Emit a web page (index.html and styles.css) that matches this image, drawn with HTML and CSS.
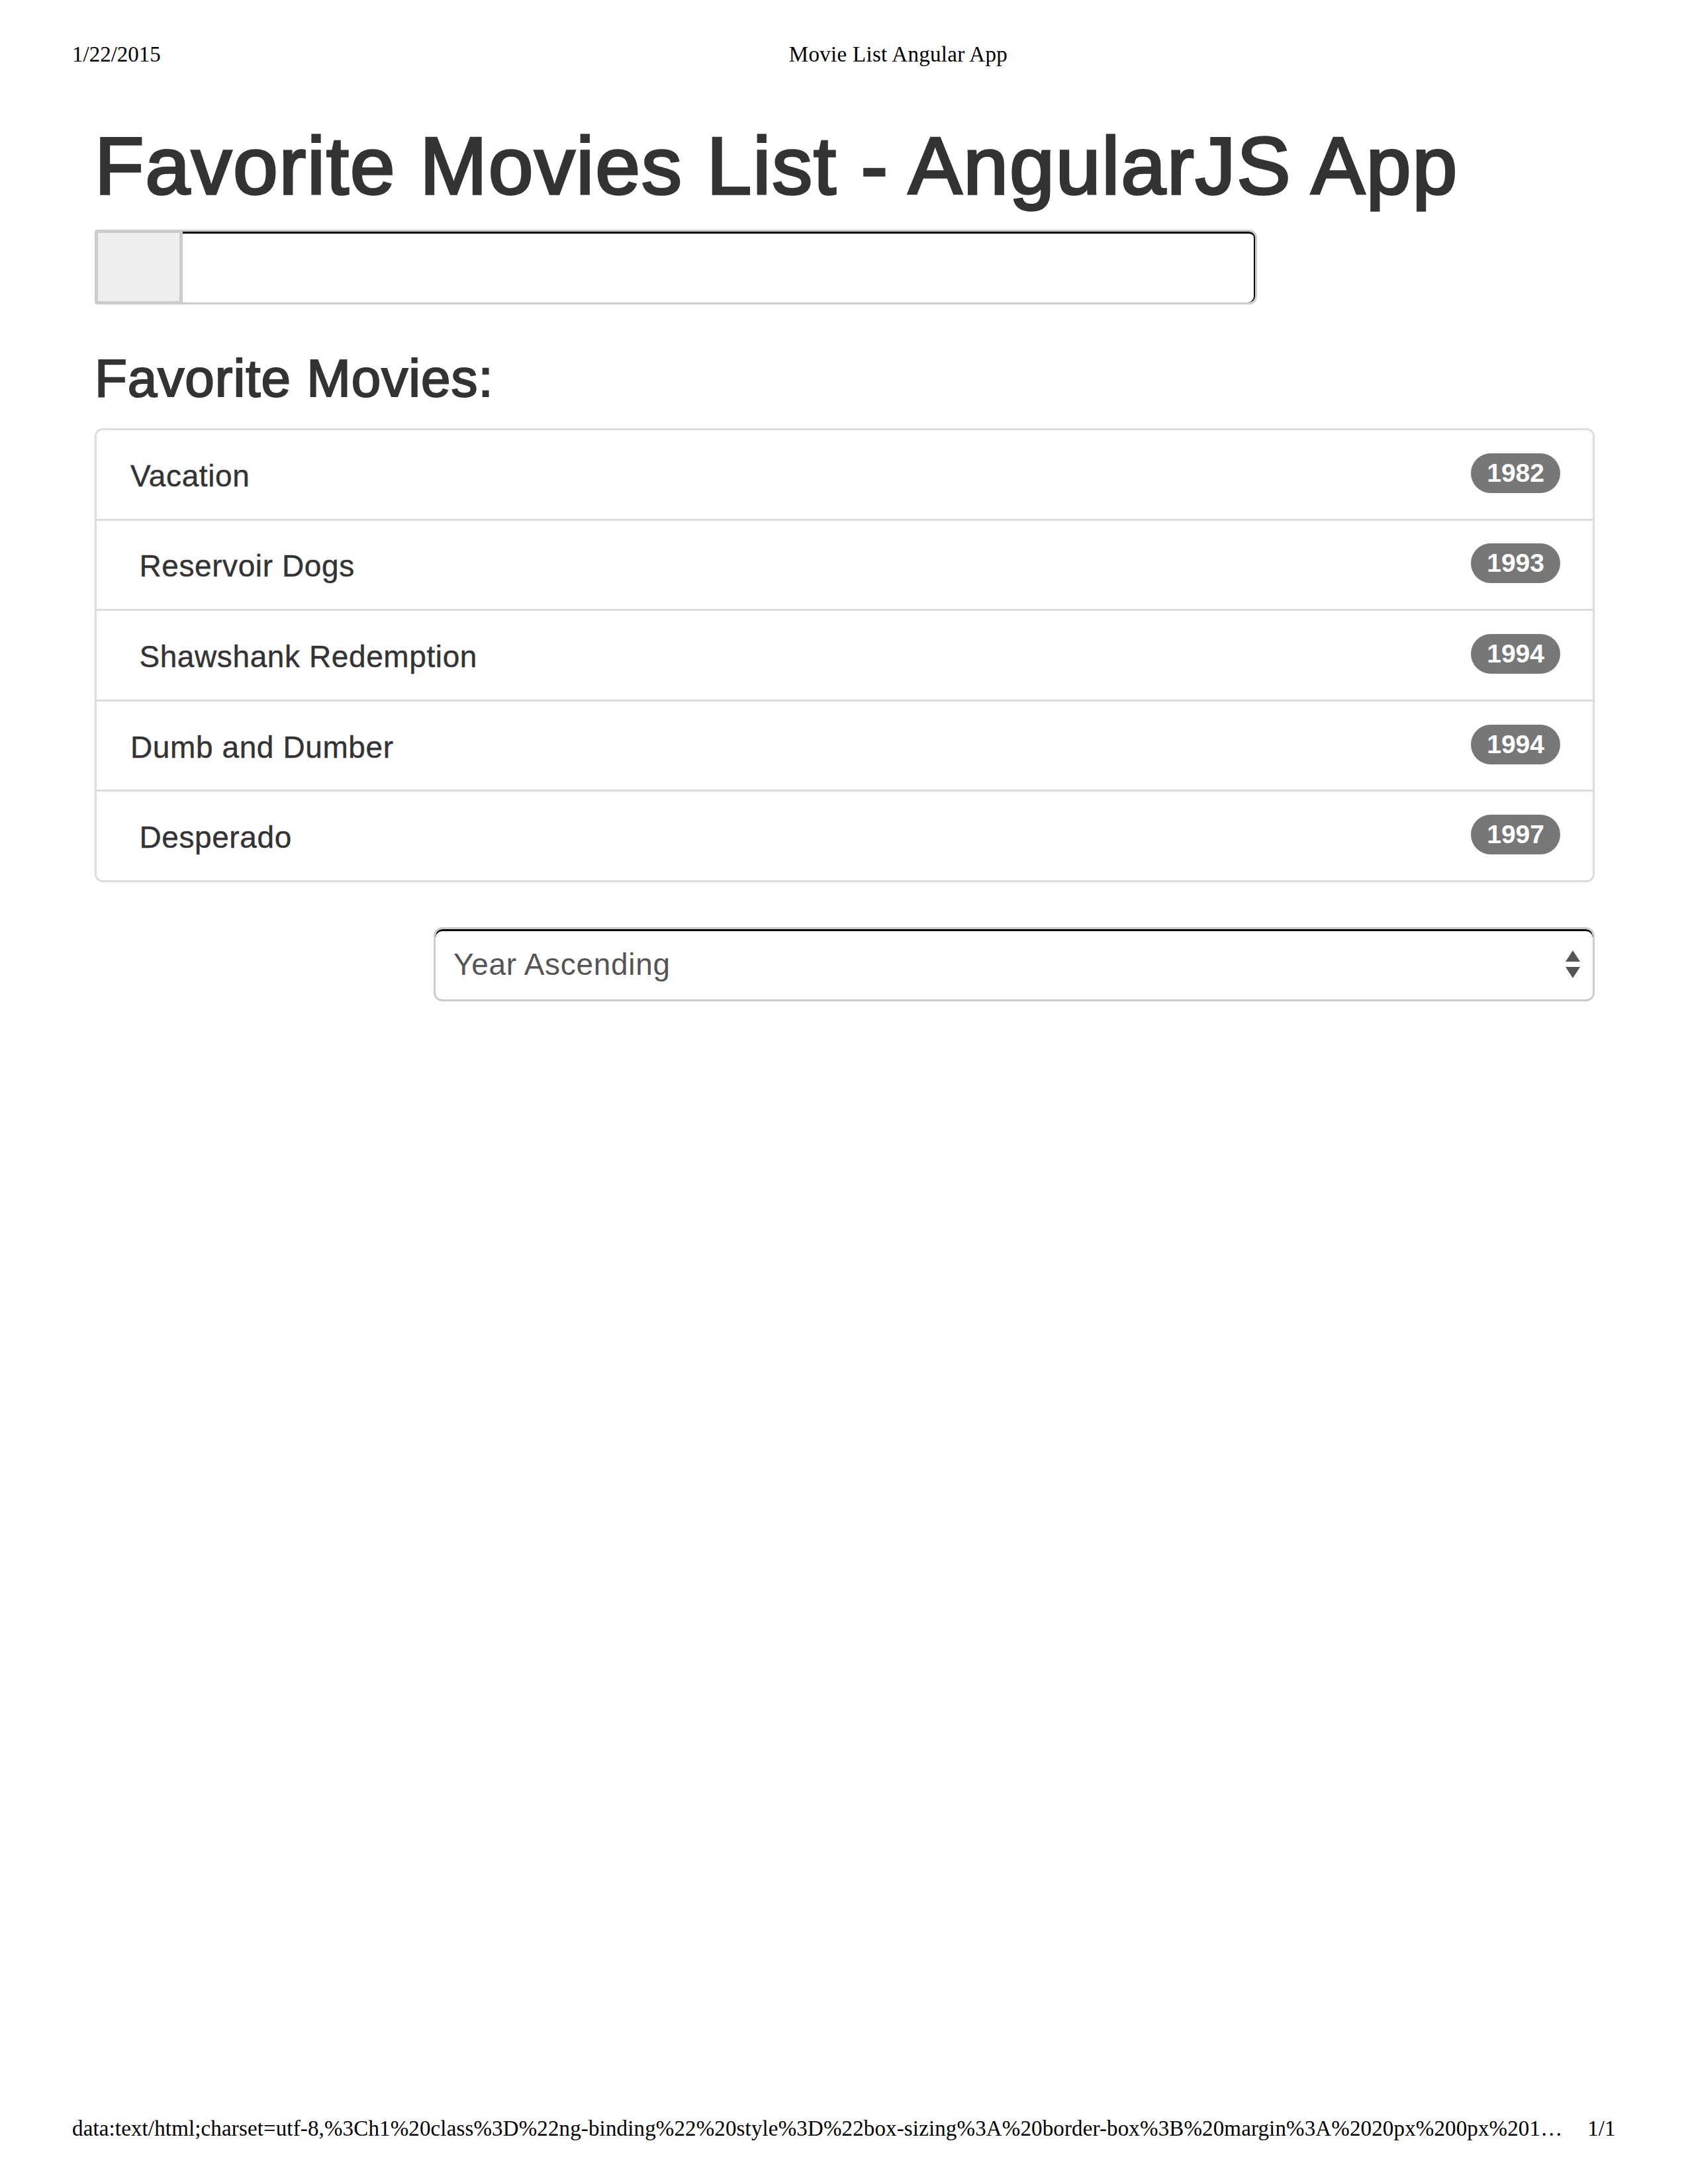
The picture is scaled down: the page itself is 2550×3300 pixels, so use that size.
FILE: index.html
```html
<!DOCTYPE html>
<html lang="en">
<head>
<meta charset="utf-8">
<title>Movie List Angular App</title>
<link rel="stylesheet" href="styles.css">
</head>
<body>
<div class="sheet">
  <header class="print-head">
    <span class="print-date">1/22/2015</span>
    <span class="print-title">Movie List Angular App</span>
  </header>

  <main class="container">
    <h1 class="page-title">Favorite Movies List - AngularJS App</h1>

    <div class="input-group">
      <span class="addon"></span>
      <input class="form-input" type="text">
    </div>

    <h3 class="section-title">Favorite Movies:</h3>

    <ul class="list-group">
      <li class="list-item"><span class="movie">Vacation</span><span class="badge">1982</span></li>
      <li class="list-item"><span class="movie"> Reservoir Dogs</span><span class="badge">1993</span></li>
      <li class="list-item"><span class="movie"> Shawshank Redemption</span><span class="badge">1994</span></li>
      <li class="list-item"><span class="movie">Dumb and Dumber</span><span class="badge">1994</span></li>
      <li class="list-item"><span class="movie"> Desperado</span><span class="badge">1997</span></li>
    </ul>

    <div class="sort-row">
      <div class="select-wrap">
        <select class="sort-select">
          <option>Year Ascending</option>
          <option>Year Descending</option>
        </select>
        <svg class="select-arrows" width="22" height="43" viewBox="0 0 22 43" aria-hidden="true">
          <polygon points="11,0 22,17 0,17" fill="#555"/>
          <polygon points="0,25 22,25 11,42" fill="#555"/>
        </svg>
      </div>
    </div>
  </main>

  <footer class="print-foot">
    <span class="print-url">data:text/html;charset=utf-8,%3Ch1%20class%3D%22ng-binding%22%20style%3D%22box-sizing%3A%20border-box%3B%20margin%3A%2020px%200px%201…</span>
    <span class="print-page">1/1</span>
  </footer>
</div>
</body>
</html>
```

FILE: styles.css
```css
html, body {
  margin: 0;
  padding: 0;
  background: #fff;
}

.sheet {
  width: 2550px;
  height: 3300px;
  display: flex;
  flex-direction: column;
  box-sizing: border-box;
}

.print-head {
  display: flex;
  padding: 66px 0 0 109px;
  font-family: "Liberation Serif", "Times New Roman", serif;
  font-size: 33px;
  line-height: 33px;
  color: #000;
}

.print-title {
  margin-left: 949px;
  letter-spacing: 0.3px;
}

.container {
  width: 2266px;
  margin-left: 143px;
  font-family: "Liberation Sans", Arial, Helvetica, sans-serif;
  color: #333;
}

.page-title {
  margin: 85px 0 0 0;
  font-size: 122px;
  line-height: 134px;
  font-weight: 400;
  letter-spacing: 1.85px;
  white-space: nowrap;
  -webkit-text-stroke: 3.5px #333;
}

.input-group {
  display: flex;
  width: 1756px;
  height: 113px;
  margin-top: 29px;
}

.addon {
  width: 133px;
  box-sizing: border-box;
  background: #eee;
  border: 5px solid #ccc;
  border-radius: 4px 0 0 4px;
}

.form-input {
  flex: 1;
  margin: 0;
  padding: 0 20px;
  box-sizing: border-box;
  height: 113px;
  border: 3px solid #ccc;
  border-left: none;
  border-radius: 0 12px 12px 0;
  box-shadow: inset 0 3px 0 #000, inset -2px 0 0 #000;
  background: #fff;
  outline: none;
  font-family: inherit;
  font-size: 46px;
}

.section-title {
  margin: 68px 0 0 0;
  font-size: 80px;
  line-height: 88px;
  font-weight: 400;
  letter-spacing: 1px;
  -webkit-text-stroke: 2.2px #333;
}

.list-group {
  list-style: none;
  margin: 31px 0 0 0;
  padding: 0;
  border: 3px solid #ddd;
  border-radius: 12px;
}

.list-item {
  display: flex;
  align-items: center;
  justify-content: space-between;
  height: 133.6px;
  padding: 0 49px 0 51px;
  font-size: 46px;
}

.list-item + .list-item {
  border-top: 3px solid #ddd;
}

.movie {
  white-space: pre;
  padding-top: 4px;
  letter-spacing: 0.6px;
  -webkit-text-stroke: 0.4px #333;
}

.badge {
  display: inline-block;
  height: 60px;
  padding: 0 24px;
  border-radius: 30px;
  background: #777;
  color: #fff;
  font-weight: 700;
  font-size: 39px;
  line-height: 60px;
  margin-top: -4px;
}

.sort-row {
  display: flex;
  justify-content: flex-end;
  margin-top: 68px;
}

.select-wrap {
  position: relative;
  width: 1754px;
}

.sort-select {
  -webkit-appearance: none;
  appearance: none;
  display: block;
  width: 100%;
  height: 112px;
  margin: 0;
  padding: 0 0 0 27px;
  box-sizing: border-box;
  border: 3px solid #ccc;
  border-radius: 13px;
  box-shadow: inset 0 3px 0 #000;
  background: #fff;
  color: #555;
  font-family: "Liberation Sans", Arial, Helvetica, sans-serif;
  font-size: 46px;
  letter-spacing: 0.7px;
  outline: none;
}

.select-arrows {
  position: absolute;
  right: 22px;
  top: 35px;
}

.print-foot {
  margin-top: auto;
  display: flex;
  padding: 0 0 67px 109px;
  font-family: "Liberation Serif", "Times New Roman", serif;
  font-size: 33px;
  line-height: 33px;
  color: #000;
  white-space: nowrap;
}

.print-url {
  letter-spacing: 0.14px;
}

.print-page {
  margin-left: 38px;
}
```
